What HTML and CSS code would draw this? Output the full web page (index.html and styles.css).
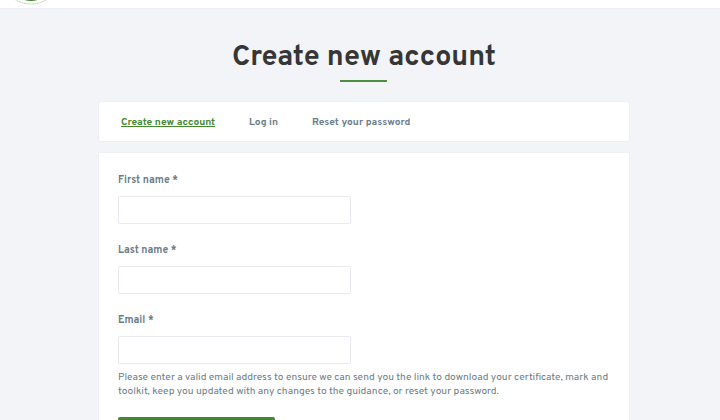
FILE: index.html
```html
<!DOCTYPE html>
<html lang="en">
<head>
    <meta charset="utf-8">
    <title>Create new account</title>
    <link rel="stylesheet" href="styles.css">
</head>
<body>
    <header class="site-header">
        <svg class="logo" width="64" height="8" viewBox="0 0 64 8">
            <circle cx="31" cy="-26" r="30" fill="none" stroke="#a5c4a0" stroke-width="0.8" stroke-dasharray="2 0.6"/>
            <circle cx="31" cy="-23" r="23.9" fill="#43882f"/>
        </svg>
    </header>
    <main class="page">
        <h1 class="page-title"><span>Create new account</span></h1>
        <nav class="tabs">
            <a href="#" class="tab active">Create new account</a>
            <a href="#" class="tab">Log in</a>
            <a href="#" class="tab">Reset your password</a>
        </nav>
        <form class="account-form">
            <div class="form-group">
                <label for="first-name">First name *</label>
                <input type="text" id="first-name" name="first_name" required>
            </div>
            <div class="form-group">
                <label for="last-name">Last name *</label>
                <input type="text" id="last-name" name="last_name" required>
            </div>
            <div class="form-group">
                <label for="email">Email *</label>
                <input type="email" id="email" name="email" required>
                <p class="description">Please enter a valid email address to ensure we can send you the link to download your certificate, mark and<br>toolkit, keep you updated with any changes to the guidance, or reset your password.</p>
            </div>
            <button type="submit" class="button-primary" aria-label="Create new account"></button>
        </form>
    </main>
</body>
</html>
```

FILE: styles.css
```css
body { margin: 0; height: 420px; overflow: hidden; background: #f3f4f7; font-family: Overpass, Roboto, sans-serif; color: #6b7d88; }
.site-header { height: 8px; background: #fff; border-bottom: 1px solid #eeeff4; }
.logo { display: block; }
.page { width: 532px; margin-left: 98px; }
.page-title { margin: 0 0 17px; padding-top: 31px; height: 44px; font-size: 28.6px; line-height: 36px; text-align: center; color: #363636; }
.page-title::after { content: ""; display: block; width: 47px; height: 2px; margin: 4px 0 0 242px; background: #4f9040; }
.tabs { display: flex; gap: 34px; box-sizing: border-box; height: 41px; padding: 2px 22px 0; align-items: center; background: #fff; border: 1px solid #eeeff4; border-radius: 2px; }
.tab { font-size: 10.2px; font-weight: bold; line-height: 14px; color: #6b7d88; text-decoration: none; white-space: nowrap; }
.tab.active { color: #43882f; text-decoration: underline; }
.account-form { box-sizing: border-box; height: 268px; margin-top: 10px; padding: 21px 19px 0; background: #fff; border: 1px solid #eeeff4; border-bottom: none; border-radius: 2px 2px 0 0; }
.form-group { margin-bottom: 20px; }
label { display: block; margin-bottom: 8px; font-size: 10.4px; font-weight: bold; line-height: 14px; }
input { display: block; box-sizing: border-box; width: 233px; height: 28px; padding: 4px 8px; border: 1px solid #e9e9f0; border-radius: 2px; background: #fff; font: inherit; font-size: 10px; }
.description { margin: 7px 0 0; font-size: 10.2px; line-height: 14px; white-space: nowrap; }
.button-primary { display: block; width: 157px; height: 3px; padding: 0; margin-top: -2px; border: none; border-radius: 2px 2px 0 0; background: #43882f; }
```
